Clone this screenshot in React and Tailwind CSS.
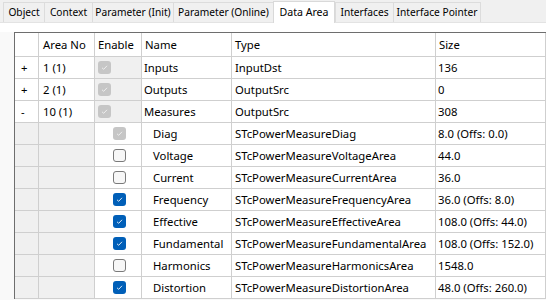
import React from "react";

const tabs = [
  ["Object", "w-[41px]"],
  ["Context", "w-[48px]"],
  ["Parameter (Init)", "w-[81px]"],
  ["Parameter (Online)", "w-[100px]"],
  ["Data Area", "w-[62px]"],
  ["Interfaces", "w-[58px]"],
  ["Interface Pointer", "w-[88px]"],
];

const rows = [
  { exp: "+", area: "1 (1)", cb: "dis", name: "Inputs", type: "InputDst", size: "136", top: true },
  { exp: "+", area: "2 (1)", cb: "dis", name: "Outputs", type: "OutputSrc", size: "0", top: true },
  { exp: "-", area: "10 (1)", cb: "dis", name: "Measures", type: "OutputSrc", size: "308", top: true },
  { cb: "dis", name: "Diag", type: "STcPowerMeasureDiag", size: "8.0 (Offs: 0.0)" },
  { cb: "off", name: "Voltage", type: "STcPowerMeasureVoltageArea", size: "44.0" },
  { cb: "off", name: "Current", type: "STcPowerMeasureCurrentArea", size: "36.0" },
  { cb: "on", name: "Frequency", type: "STcPowerMeasureFrequencyArea", size: "36.0 (Offs: 8.0)" },
  { cb: "on", name: "Effective", type: "STcPowerMeasureEffectiveArea", size: "108.0 (Offs: 44.0)" },
  { cb: "on", name: "Fundamental", type: "STcPowerMeasureFundamentalArea", size: "108.0 (Offs: 152.0)" },
  { cb: "off", name: "Harmonics", type: "STcPowerMeasureHarmonicsArea", size: "1548.0" },
  { cb: "on", name: "Distortion", type: "STcPowerMeasureDistortionArea", size: "48.0 (Offs: 260.0)" },
];

function Check({ state }) {
  if (state === "on")
    return (
      <div className="w-[13px] h-[13px] rounded-[3px] bg-[#005fb8] flex items-center justify-center">
        <svg width="9" height="9" viewBox="0 0 9 9"><path d="M2 4.8 L3.7 6.3 L7 2.8" fill="none" stroke="#dbe8f5" strokeWidth="1" /></svg>
      </div>
    );
  if (state === "dis")
    return (
      <div className="w-[13px] h-[13px] rounded-[3px] bg-[#c6c6c6] flex items-center justify-center">
        <svg width="9" height="9" viewBox="0 0 9 9"><path d="M2 4.8 L3.7 6.3 L7 2.8" fill="none" stroke="#eeeeee" strokeWidth="1" /></svg>
      </div>
    );
  return <div className="w-[13px] h-[13px] rounded-[3px] bg-[#f7f7f7] border border-[#7a7a7a]" />;
}

const cell = "border-r border-b border-[#cfcfcf] flex items-center whitespace-nowrap overflow-hidden";

export default function App() {
  return (
    <div className="w-[546px] h-[300px] overflow-hidden bg-[#f9f9f9] text-[11.3px] text-black leading-none" style={{ fontFamily: '"Noto Sans", "Open Sans", sans-serif' }}>
      <div className="h-[23px] bg-[#f0f0f0] flex items-end pl-[3px] border-b border-[#e3e3e3] text-[10.2px]">
        {tabs.map(([t, w]) => {
          const sel = t === "Data Area";
          return (
            <div
              key={t}
              className={
                sel
                  ? `${w} h-[22px] shrink-0 whitespace-nowrap bg-white border border-b-0 border-[#d9d9d9] flex items-center justify-center -mb-px relative z-10 text-[10.6px]`
                  : `${w} h-[20px] shrink-0 whitespace-nowrap bg-[#f0f0f0] border border-b-0 border-r-0 border-[#dcdcdc] flex items-center justify-center last:border-r`
              }
            >
              {t}
            </div>
          );
        })}
      </div>
      <div className="h-[9px] bg-white" />
      <div className="ml-[14px] border-l border-t border-[#6e6e6e] bg-white">
        <div className="grid grid-cols-[24px_56px_47px_90px_204px_1fr]">
          <div className={`${cell} h-[24px]`} />
          <div className={`${cell} h-[24px] pl-[4px]`}>Area No</div>
          <div className={`${cell} h-[24px] pl-[3px]`}>Enable</div>
          <div className={`${cell} h-[24px] pl-[3px]`}>Name</div>
          <div className={`${cell} h-[24px] pl-[3px]`}>Type</div>
          <div className={`${cell} h-[24px] pl-[3px]`}>Size</div>
          {rows.map((r, i) => (
            <React.Fragment key={i}>
              <div className={`${cell} h-[22px] pl-[6px] ${r.top ? "bg-white" : "bg-[#f0f0f0]"}`}>{r.exp}</div>
              <div className={`${cell} h-[22px] pl-[4px] ${r.top ? "bg-white" : "bg-[#f0f0f0]"}`}>{r.area}</div>
              <div className={`${cell} h-[22px] ${r.top ? "bg-[#f0f0f0] pl-[3px]" : "bg-white pl-[18px]"}`}>
                <Check state={r.cb} />
              </div>
              <div className={`${cell} h-[22px] ${r.top ? "pl-[2px]" : "pl-[11px]"}`}>{r.name}</div>
              <div className={`${cell} h-[22px] pl-[3px]`}>{r.type}</div>
              <div className={`${cell} h-[22px] pl-[2px]`}>{r.size}</div>
            </React.Fragment>
          ))}
        </div>
      </div>
    </div>
  );
}
